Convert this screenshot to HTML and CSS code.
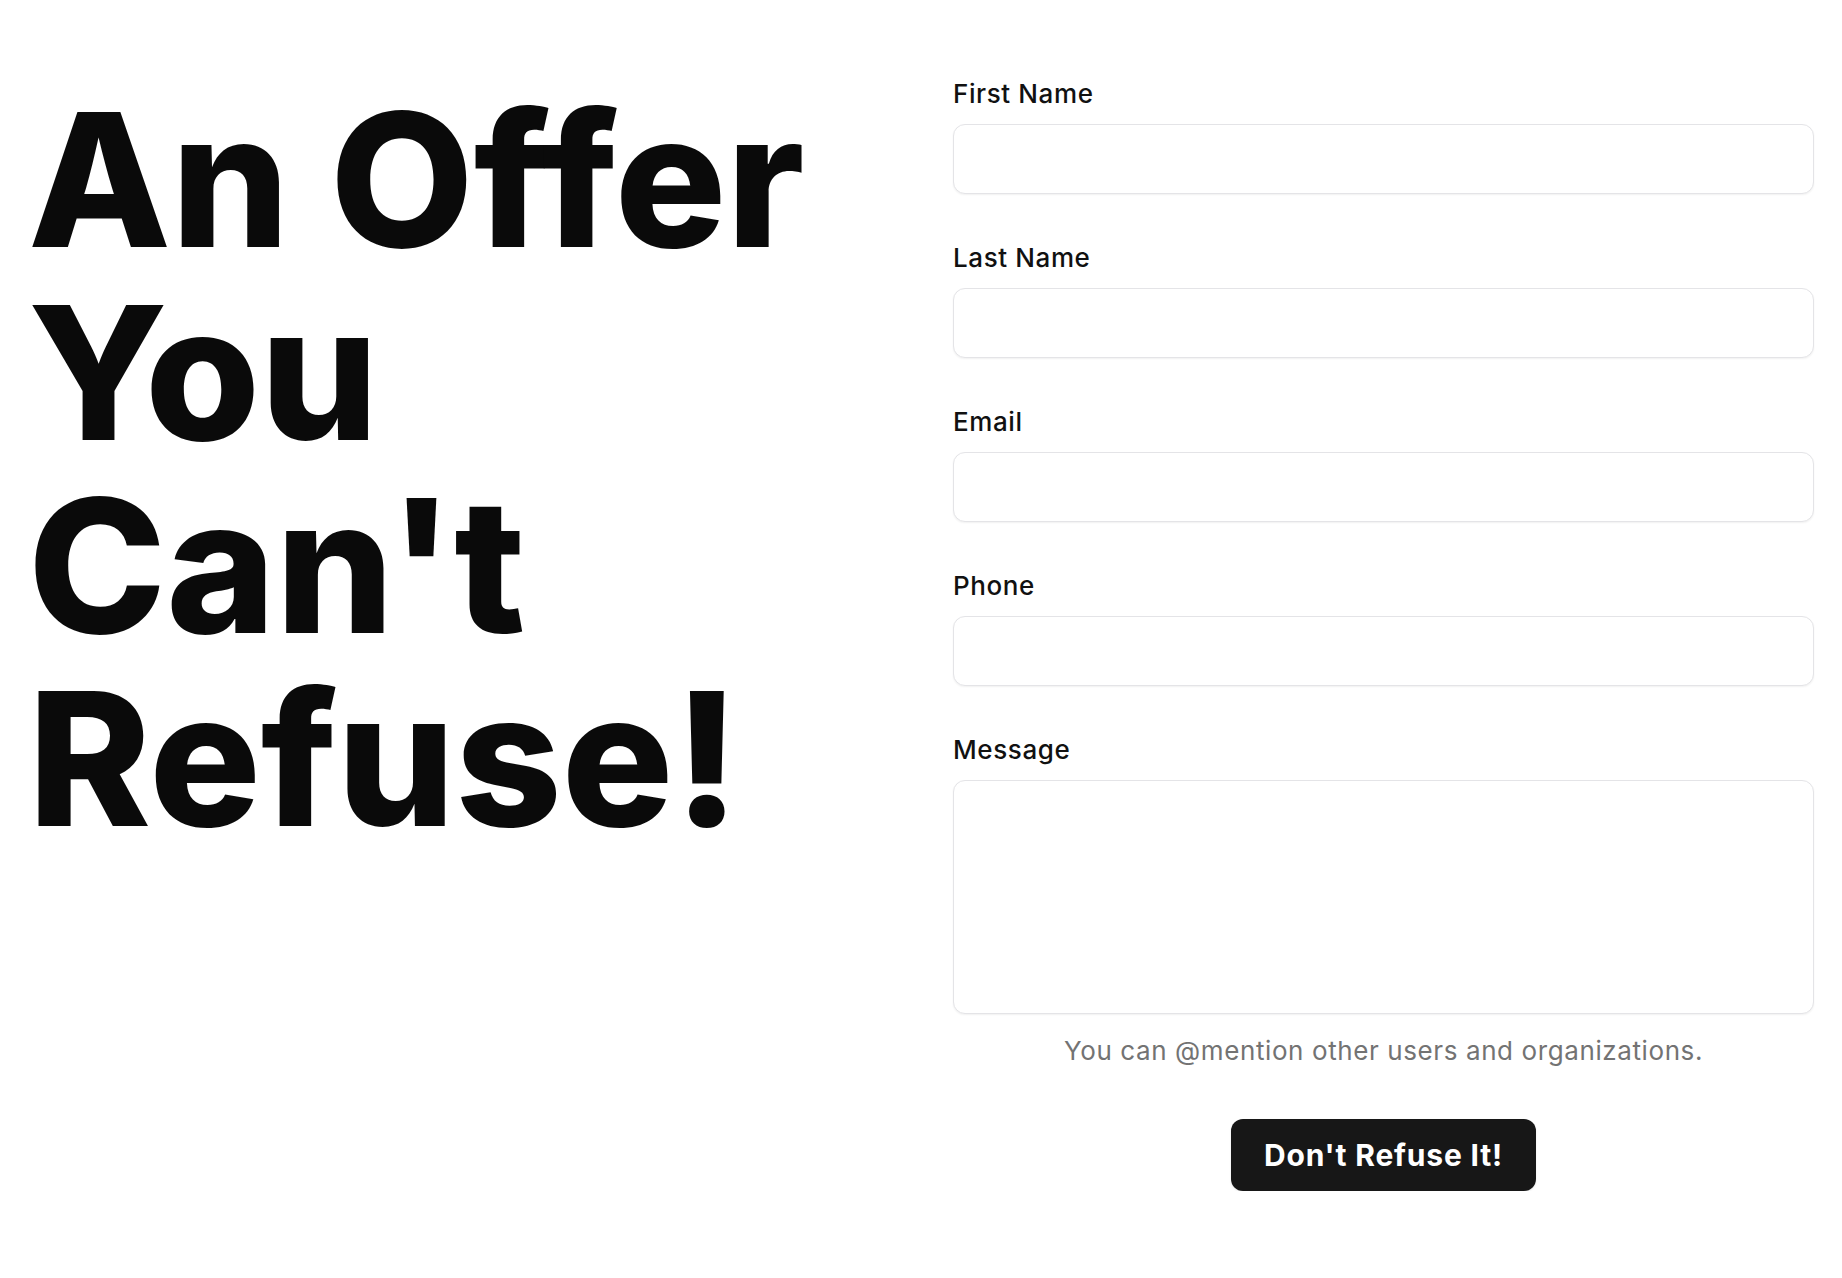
FILE: index.html
```html
<!DOCTYPE html>
<html lang="en">
<head>
<meta charset="utf-8">
<title>An Offer You Can't Refuse!</title>
<link rel="stylesheet" href="styles.css">
</head>
<body>
<main class="page">
  <section class="hero">
    <h1 class="headline">
      <span class="line">An Offer</span>
      <span class="line">You</span>
      <span class="line">Can't</span>
      <span class="line">Refuse!</span>
    </h1>
  </section>
  <form class="form">
    <div class="field">
      <label class="label" for="first">First Name</label>
      <input class="input" id="first" type="text">
    </div>
    <div class="field">
      <label class="label" for="last">Last Name</label>
      <input class="input" id="last" type="text">
    </div>
    <div class="field">
      <label class="label" for="email">Email</label>
      <input class="input" id="email" type="email">
    </div>
    <div class="field">
      <label class="label" for="phone">Phone</label>
      <input class="input" id="phone" type="tel">
    </div>
    <div class="field field-last">
      <label class="label" for="message">Message</label>
      <textarea class="input textarea" id="message"></textarea>
    </div>
    <p class="hint">You can @mention other users and organizations.</p>
    <div class="actions">
      <button class="button" type="button">Don't Refuse It!</button>
    </div>
  </form>
</main>
</body>
</html>
```

FILE: styles.css
```css
* { box-sizing: border-box; }
html, body { margin: 0; padding: 0; background: #ffffff; }
body {
  font-family: Inter, "Noto Sans", "Liberation Sans", sans-serif;
  color: #0a0a0a;
}
.page {
  display: grid;
  grid-template-columns: 1fr 1fr;
  column-gap: 64px;
  padding: 0 28px;
}
.hero { padding-top: 83px; }
.headline {
  margin: 0;
  display: flex;
  flex-direction: column;
  font-size: 186px;
  line-height: 193px;
  font-weight: 800;
  letter-spacing: 0;
  color: #0a0a0a;
}
.line { display: block; height: 193px; }
.form {
  display: flex;
  flex-direction: column;
  padding-top: 78px;
}
.field {
  display: flex;
  flex-direction: column;
  gap: 14px;
  margin-bottom: 48px;
}
.field-last { margin-bottom: 22px; }
.label {
  font-size: 26px;
  line-height: 32px;
  font-weight: 500;
  letter-spacing: 0.6px;
  color: #111111;
}
.input {
  display: block;
  width: 100%;
  height: 70px;
  border: 1.5px solid #e4e4e7;
  border-radius: 12px;
  background: #ffffff;
  box-shadow: 0 1px 2px rgba(0, 0, 0, 0.06);
  font: inherit;
  outline: none;
}
.textarea { height: 234px; resize: none; }
.hint {
  margin: 0;
  text-align: center;
  font-size: 26px;
  line-height: 30px;
  letter-spacing: 0.6px;
  color: #737373;
}
.actions {
  display: flex;
  justify-content: center;
  margin-top: 53px;
}
.button {
  width: 305px;
  height: 72px;
  border: none;
  border-radius: 12px;
  background: #171717;
  color: #ffffff;
  font-family: Inter, "Noto Sans", sans-serif;
  font-size: 30px;
  font-weight: 700;
  letter-spacing: 0.8px;
  box-shadow: 0 1px 2px rgba(0, 0, 0, 0.1);
}
```
